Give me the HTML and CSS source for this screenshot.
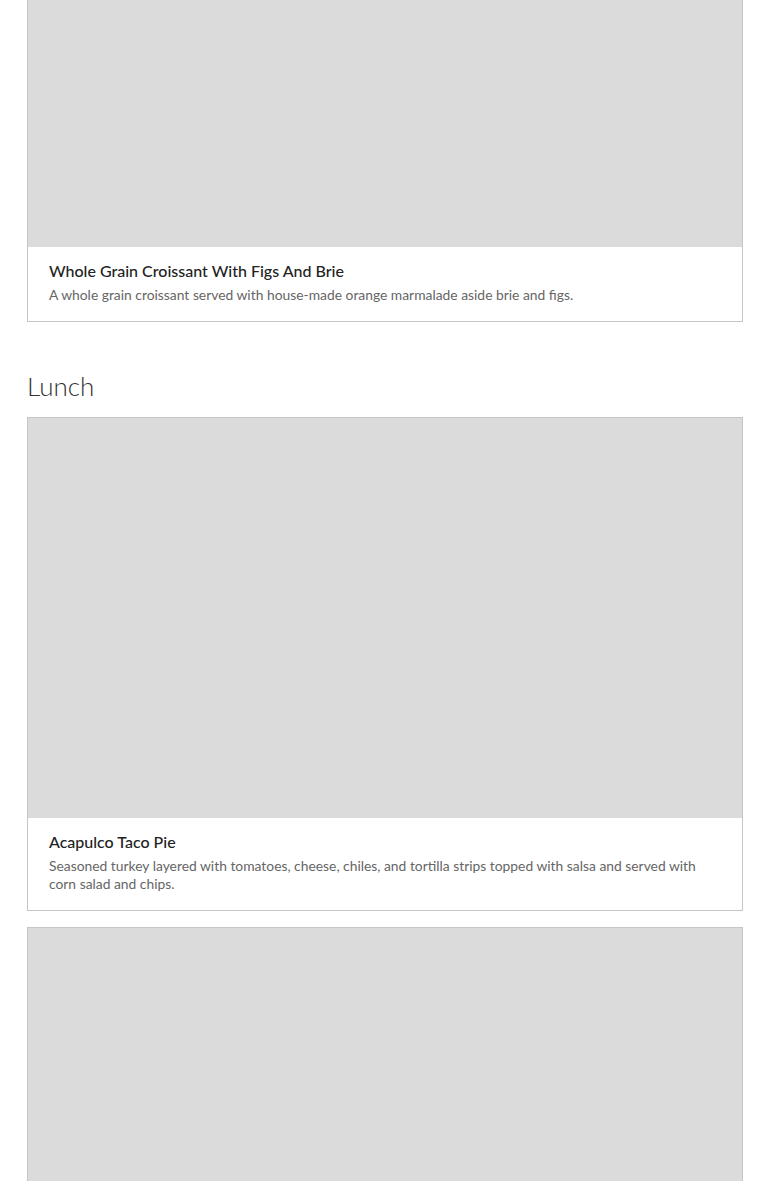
FILE: index.html
```html
<!DOCTYPE html>
<html>
<head>
<meta charset="utf-8">
<link rel="stylesheet" href="styles.css">
</head>
<body>
<main class="menu">
  <article class="card">
    <div class="card-image"></div>
    <div class="card-body">
      <h3 class="card-title">Whole Grain Croissant With Figs And Brie</h3>
      <p class="card-text">A whole grain croissant served with house-made orange marmalade aside brie and figs.</p>
    </div>
  </article>

  <section class="section">
    <h2 class="section-title">Lunch</h2>
    <article class="card">
      <div class="card-image"></div>
      <div class="card-body">
        <h3 class="card-title">Acapulco Taco Pie</h3>
        <p class="card-text">Seasoned turkey layered with tomatoes, cheese, chiles, and tortilla strips topped with salsa and served with corn salad and chips.</p>
      </div>
    </article>
    <article class="card">
      <div class="card-image"></div>
    </article>
  </section>
</main>
</body>
</html>
```

FILE: styles.css
```css
html, body {
  margin: 0;
  padding: 0;
  background: #fff;
}

body {
  font-family: "Lato", "Open Sans", "Liberation Sans", sans-serif;
  overflow: hidden;
}

.menu {
  padding: 0 27px;
  margin-top: -154px;
  display: flex;
  flex-direction: column;
}

.card {
  border: 1px solid #c6c6c6;
  background: #fff;
  display: flex;
  flex-direction: column;
}

.card + .card {
  margin-top: 16px;
}

.card-image {
  height: 400px;
  background: #dbdbdb;
}

.card-body {
  padding: 14px 21px 17px;
}

.card-title {
  margin: 0;
  font-family: "Lato", sans-serif;
  font-weight: 500;
  font-size: 16px;
  line-height: 20px;
  color: #222;
}

.card-text {
  margin: 5px 0 0;
  font-family: "Lato", "Open Sans", sans-serif;
  font-size: 13.85px;
  line-height: 18px;
  color: #666;
}

.section {
  display: flex;
  flex-direction: column;
}

.section-title {
  margin: 48px 0 15px;
  font-family: "Lato", sans-serif;
  font-weight: 300;
  font-size: 26px;
  line-height: 32px;
  color: #333;
}
```
